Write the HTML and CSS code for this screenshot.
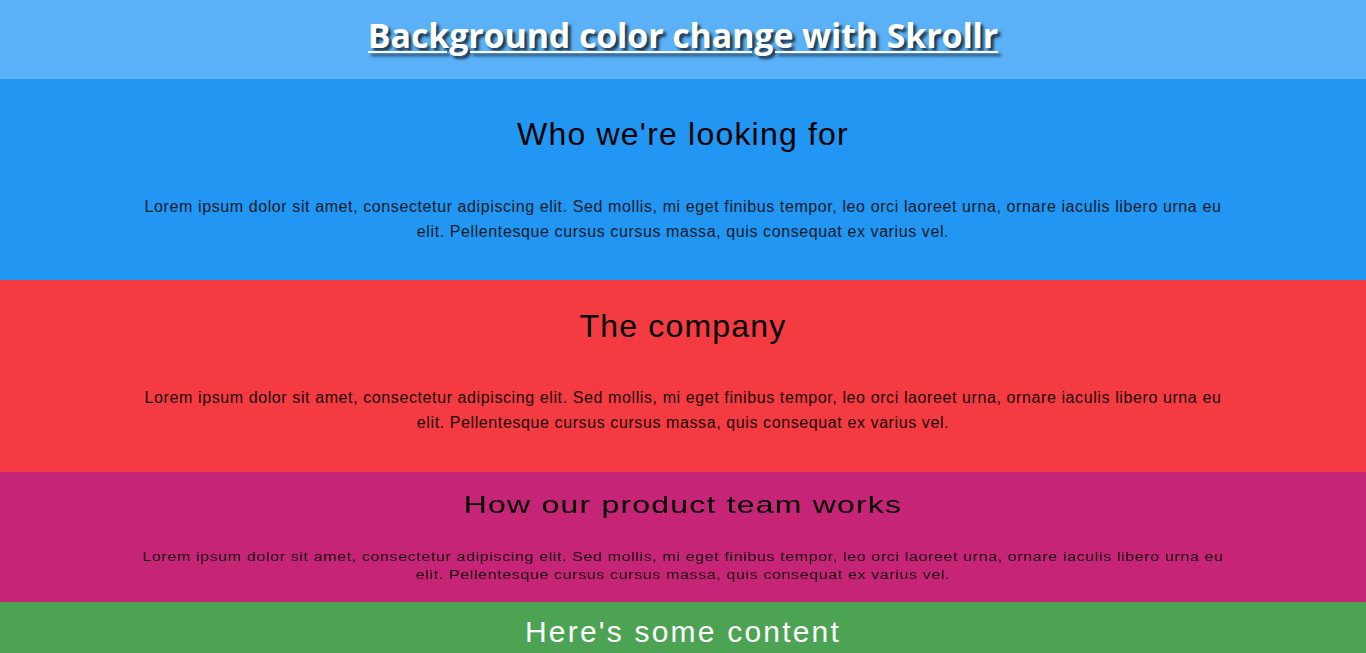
FILE: index.html
```html
<!DOCTYPE html>
<html lang="en">
<head>
<meta charset="utf-8">
<title>Background color change with Skrollr</title>
<link rel="stylesheet" href="styles.css">
</head>
<body>
<header class="hero">
  <h1 class="hero-title">Background color change with Skrollr</h1>
</header>
<section class="panel panel-blue">
  <h2 class="panel-title">Who we're looking for</h2>
  <p class="panel-text">Lorem ipsum dolor sit amet, consectetur adipiscing elit. Sed mollis, mi eget finibus tempor, leo orci laoreet urna, ornare iaculis libero urna eu elit. Pellentesque cursus cursus massa, quis consequat ex varius vel.</p>
</section>
<section class="panel panel-red">
  <h2 class="panel-title">The company</h2>
  <p class="panel-text">Lorem ipsum dolor sit amet, consectetur adipiscing elit. Sed mollis, mi eget finibus tempor, leo orci laoreet urna, ornare iaculis libero urna eu elit. Pellentesque cursus cursus massa, quis consequat ex varius vel.</p>
</section>
<section class="panel panel-pink">
  <div class="panel-squash">
    <h2 class="panel-title">How our product team works</h2>
    <p class="panel-text">Lorem ipsum dolor sit amet, consectetur adipiscing elit. Sed mollis, mi eget finibus tempor, leo orci laoreet urna, ornare iaculis libero urna eu elit. Pellentesque cursus cursus massa, quis consequat ex varius vel.</p>
  </div>
</section>
<section class="panel panel-green">
  <h2 class="panel-title">Here's some content</h2>
  <p class="panel-text">Lorem ipsum dolor sit amet, consectetur adipiscing elit. Sed mollis, mi eget finibus tempor, leo orci laoreet urna, ornare iaculis libero urna eu elit. Pellentesque cursus cursus massa, quis consequat ex varius vel.</p>
</section>
</body>
</html>
```
FILE: styles.css
```css
* { box-sizing: border-box; }

body {
  margin: 0;
  font-family: "Liberation Sans", Arial, sans-serif;
  color: #000;
}

.hero {
  height: 79px;
  background: #5ab1f8;
  display: flex;
  align-items: center;
  justify-content: center;
}

.hero-title {
  margin: 0;
  font-family: "Open Sans", Lato, sans-serif;
  font-weight: 700;
  font-size: 34px;
  line-height: 40px;
  letter-spacing: -0.15px;
  color: #fff;
  text-decoration: underline;
  text-decoration-thickness: 2px;
  text-underline-offset: 3px;
  text-shadow: 3px 3px 3px rgba(0, 0, 0, 0.7);
  padding-bottom: 10px;
}

.panel {
  text-align: center;
}

.panel-title {
  margin: 0;
  font-size: 32px;
  font-weight: 400;
  line-height: 37px;
  letter-spacing: 1.2px;
}

.panel-text {
  margin: 0 auto;
  max-width: 1092px;
  font-size: 16px;
  line-height: 25px;
  letter-spacing: 0.6px;
}

.panel-blue {
  background: #2196f3;
  padding: 37px 0 36px;
}
.panel-blue .panel-title { margin-bottom: 41px; }
.panel-blue .panel-text { color: #0d1b2a; }

.panel-red {
  background: #f43b42;
  padding: 28px 0 37px;
}
.panel-red .panel-title { margin-bottom: 40px; }
.panel-red .panel-text { color: #1a0506; }

.panel-pink {
  background: #c62476;
  height: 130px;
  overflow: hidden;
}
.panel-squash {
  padding-top: 25px;
  transform: scaleY(0.75);
  transform-origin: top center;
}
.panel-pink .panel-title {
  margin-bottom: 38px;
}
.panel-pink .panel-text {
  letter-spacing: 0.63px;
  color: #1a0410;
}

.panel-green {
  background: #4ba353;
  padding: 12px 0 40px;
  min-height: 200px;
  color: #fff;
}
.panel-green .panel-title {
  font-size: 30px;
  line-height: 35px;
  letter-spacing: 2.2px;
  margin-bottom: 38px;
}
```
